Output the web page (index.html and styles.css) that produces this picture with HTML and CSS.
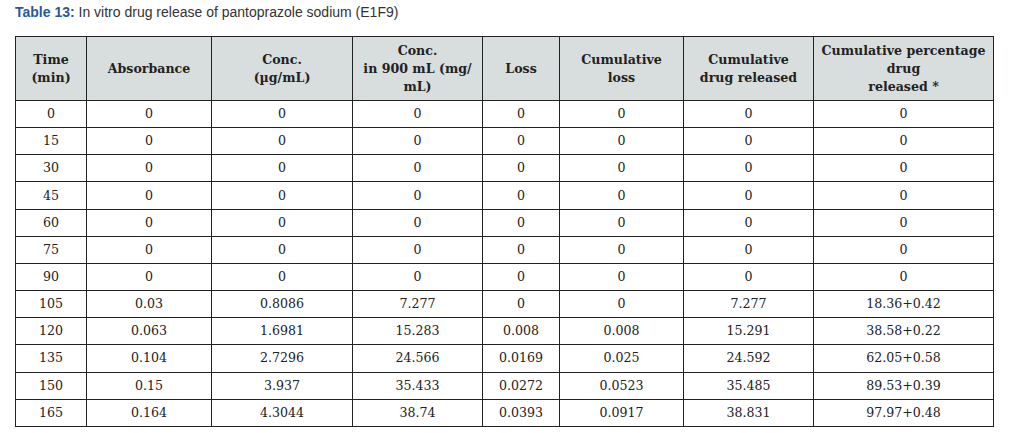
FILE: index.html
```html
<!DOCTYPE html>
<html>
<head>
<meta charset="utf-8">
<link rel="stylesheet" href="styles.css">
</head>
<body>
<div class="page">
  <p class="caption"><span class="label">Table 13:</span> In vitro drug release of pantoprazole sodium (E1F9)</p>
  <table class="data">
    <colgroup>
      <col class="c1"><col class="c2"><col class="c3"><col class="c4"><col class="c5"><col class="c6"><col class="c7"><col class="c8">
    </colgroup>
    <thead>
      <tr>
        <th>Time<br>(min)</th>
        <th>Absorbance</th>
        <th>Conc.<br>(µg/mL)</th>
        <th>Conc.<br>in 900 mL (mg/<br>mL)</th>
        <th>Loss</th>
        <th>Cumulative<br>loss</th>
        <th>Cumulative<br>drug released</th>
        <th>Cumulative percentage<br>drug<br>released *</th>
      </tr>
    </thead>
    <tbody>
      <tr><td>0</td><td>0</td><td>0</td><td>0</td><td>0</td><td>0</td><td>0</td><td>0</td></tr>
      <tr><td>15</td><td>0</td><td>0</td><td>0</td><td>0</td><td>0</td><td>0</td><td>0</td></tr>
      <tr><td>30</td><td>0</td><td>0</td><td>0</td><td>0</td><td>0</td><td>0</td><td>0</td></tr>
      <tr><td>45</td><td>0</td><td>0</td><td>0</td><td>0</td><td>0</td><td>0</td><td>0</td></tr>
      <tr><td>60</td><td>0</td><td>0</td><td>0</td><td>0</td><td>0</td><td>0</td><td>0</td></tr>
      <tr><td>75</td><td>0</td><td>0</td><td>0</td><td>0</td><td>0</td><td>0</td><td>0</td></tr>
      <tr><td>90</td><td>0</td><td>0</td><td>0</td><td>0</td><td>0</td><td>0</td><td>0</td></tr>
      <tr><td>105</td><td>0.03</td><td>0.8086</td><td>7.277</td><td>0</td><td>0</td><td>7.277</td><td>18.36+0.42</td></tr>
      <tr><td>120</td><td>0.063</td><td>1.6981</td><td>15.283</td><td>0.008</td><td>0.008</td><td>15.291</td><td>38.58+0.22</td></tr>
      <tr><td>135</td><td>0.104</td><td>2.7296</td><td>24.566</td><td>0.0169</td><td>0.025</td><td>24.592</td><td>62.05+0.58</td></tr>
      <tr><td>150</td><td>0.15</td><td>3.937</td><td>35.433</td><td>0.0272</td><td>0.0523</td><td>35.485</td><td>89.53+0.39</td></tr>
      <tr><td>165</td><td>0.164</td><td>4.3044</td><td>38.74</td><td>0.0393</td><td>0.0917</td><td>38.831</td><td>97.97+0.48</td></tr>
    </tbody>
  </table>
</div>
</body>
</html>
```

FILE: styles.css
```css
html, body {
  margin: 0;
  padding: 0;
  background: #ffffff;
}

.page {
  padding: 4px 0 0 15px;
}

.caption {
  margin: 0 0 15px 0;
  font-family: "Liberation Sans", Arial, sans-serif;
  font-size: 14px;
  line-height: 17px;
  color: #333333;
}

.caption .label {
  font-weight: bold;
  color: #2b5797;
}

.data {
  border-collapse: collapse;
  table-layout: fixed;
  width: 979px;
  font-family: "DejaVu Serif", "Liberation Serif", serif;
  font-size: 12.6px;
  color: #222222;
}

.c1 { width: 71px; }
.c2 { width: 125px; }
.c3 { width: 141px; }
.c4 { width: 130px; }
.c5 { width: 77px; }
.c6 { width: 124px; }
.c7 { width: 130px; }
.c8 { width: 180px; }

.data th,
.data td {
  border: 1px solid #222222;
  text-align: center;
  vertical-align: middle;
  padding: 0 2px;
}

.data th {
  background: #d8dddd;
  font-weight: bold;
  line-height: 18px;
  height: 63px;
}

.data td {
  height: 26.17px;
  line-height: 16px;
}
```
